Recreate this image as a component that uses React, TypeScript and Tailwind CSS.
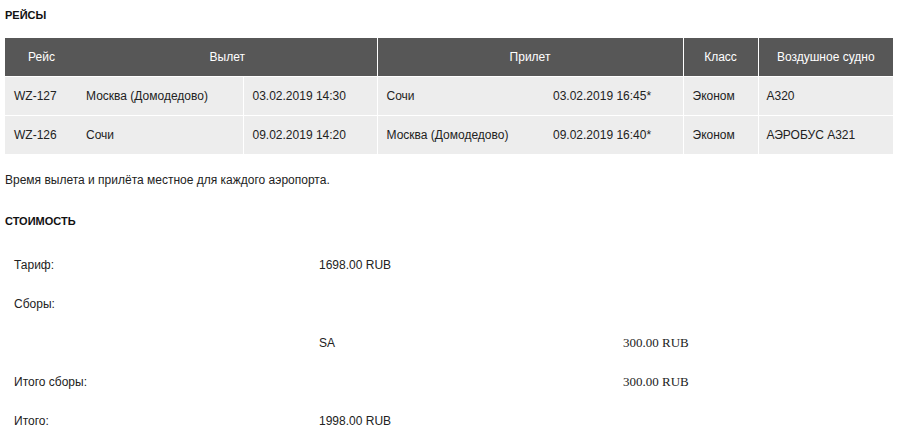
import React from "react";

const flights = [
  { no: "WZ-127", from: "Москва (Домодедово)", dep: "03.02.2019 14:30", to: "Сочи", arr: "03.02.2019 16:45*", cls: "Эконом", craft: "A320" },
  { no: "WZ-126", from: "Сочи", dep: "09.02.2019 14:20", to: "Москва (Домодедово)", arr: "09.02.2019 16:40*", cls: "Эконом", craft: "АЭРОБУС A321" },
];

export default function App() {
  return (
    <div className="w-[897px] h-[436px] overflow-hidden bg-white pl-[5px] text-[12px] text-[#222] font-['Liberation_Sans',Arial,sans-serif]">
      <h2 className="h-[30px] leading-[30px] text-[11px] font-bold uppercase text-[#111]">Рейсы</h2>

      {/* Flights */}
      <table className="mt-[8px] w-[888px] table-fixed border-collapse">
        <colgroup>
          <col className="w-[73px]" />
          <col className="w-[165px]" />
          <col className="w-[134px]" />
          <col className="w-[166px]" />
          <col className="w-[140px]" />
          <col className="w-[75px]" />
          <col className="w-[135px]" />
        </colgroup>
        <thead>
          <tr className="h-[38px] bg-[#575757] text-white font-normal">
            <th className="font-normal text-center">Рейс</th>
            <th colSpan={2} className="font-normal text-center">Вылет</th>
            <th colSpan={2} className="font-normal text-center border-l border-white">Прилет</th>
            <th className="font-normal text-center border-l border-white">Класс</th>
            <th className="font-normal text-center border-l border-white">Воздушное судно</th>
          </tr>
        </thead>
        <tbody>
          {flights.map(f => (
            <tr key={f.no} className="h-[39px] bg-[#ededed] border-t border-white">
              <td className="pl-[9px]">{f.no}</td>
              <td className="pl-[8px] whitespace-nowrap">{f.from}</td>
              <td className="pl-[9px] border-l border-white">{f.dep}</td>
              <td className="pl-[9px] border-l border-white whitespace-nowrap">{f.to}</td>
              <td className="pl-[10px]">{f.arr}</td>
              <td className="pl-[9px] border-l border-white">{f.cls}</td>
              <td className="pl-[8px] border-l border-white">{f.craft}</td>
            </tr>
          ))}
        </tbody>
      </table>

      <p className="mt-[18px] leading-[16px]">Время вылета и прилёта местное для каждого аэропорта.</p>

      <h2 className="mt-[25px] leading-[16px] text-[11px] font-bold uppercase text-[#111]">Стоимость</h2>

      {/* Cost */}
      <table className="mt-[16px] w-[888px] table-fixed border-collapse">
        <colgroup>
          <col className="w-[305px]" />
          <col className="w-[304px]" />
          <col className="w-[279px]" />
        </colgroup>
        <tbody>
          <tr className="h-[39px]">
            <td className="pl-[9px]">Тариф:</td>
            <td className="pl-[9px]">1698.00 RUB</td>
            <td />
          </tr>
          <tr className="h-[39px]">
            <td className="pl-[9px]">Сборы:</td>
            <td />
            <td />
          </tr>
          <tr className="h-[39px]">
            <td />
            <td className="pl-[9px]">SA</td>
            <td className="pl-[9px] text-[13px] font-['Liberation_Serif','Times_New_Roman',serif]">300.00 RUB</td>
          </tr>
          <tr className="h-[39px]">
            <td className="pl-[9px]">Итого сборы:</td>
            <td />
            <td className="pl-[9px] text-[13px] font-['Liberation_Serif','Times_New_Roman',serif]">300.00 RUB</td>
          </tr>
          <tr className="h-[39px]">
            <td className="pl-[9px]">Итого:</td>
            <td className="pl-[9px]">1998.00 RUB</td>
            <td />
          </tr>
        </tbody>
      </table>
    </div>
  );
}
